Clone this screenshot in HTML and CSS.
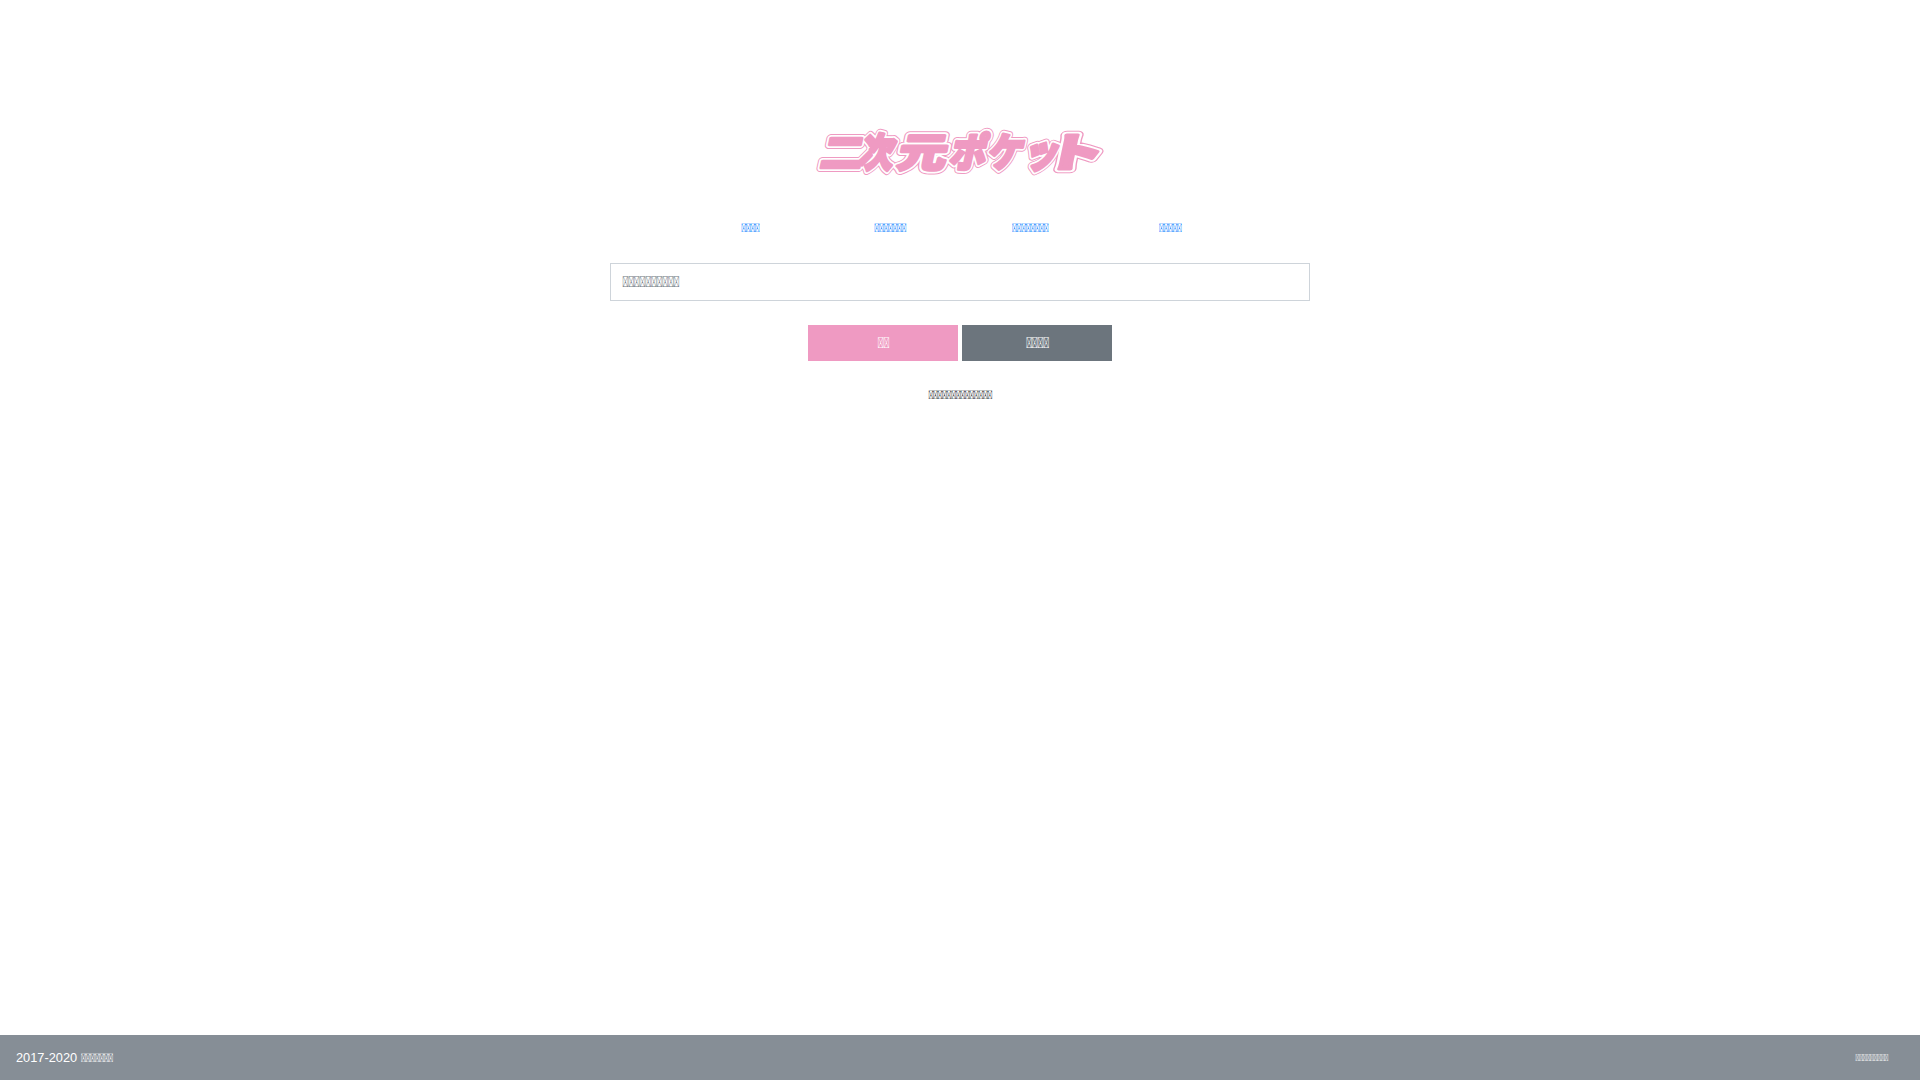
FILE: index.html
```html
<!DOCTYPE html>
<html lang="ja">
<head>
<meta charset="utf-8">
<title>二次元ポケット</title>
<link rel="stylesheet" href="styles.css">
</head>
<body>
<main class="main">
  <h1 class="logo">
    <svg class="logo-svg" viewBox="0 0 300 64" width="300" height="64" role="img" aria-label="二次元ポケット">
      <defs>
        <g id="logo-word" transform="skewX(-12)">
          <text transform="translate(19 47) scale(1.06 1)">二</text>
          <text transform="translate(58 47) scale(.85 1)">次</text>
          <text transform="translate(96 47) scale(1.22 1)">元</text>
          <text transform="translate(148 47) scale(.92 1)">ポ</text>
          <text transform="translate(186 47) scale(.88 1)">ケ</text>
          <text transform="translate(222 47) scale(.9 1)">ッ</text>
          <text transform="translate(243 47) scale(1.45 1)">ト</text>
        </g>
      </defs>
      <use class="logo-edge" href="#logo-word"></use>
      <use class="logo-gap" href="#logo-word"></use>
      <use class="logo-fill" href="#logo-word"></use>
    </svg>
  </h1>
  <nav class="tabs">
    <a class="tab" href="#">&#xE000;&#xE000;&#xE000;&#xE000;</a>
    <a class="tab" href="#">&#xE000;&#xE000;&#xE000;&#xE000;&#xE000;&#xE000;&#xE000;</a>
    <a class="tab" href="#">&#xE000;&#xE000;&#xE000;&#xE000;&#xE000;&#xE000;&#xE000;&#xE000;</a>
    <a class="tab" href="#">&#xE000;&#xE000;&#xE000;&#xE000;&#xE000;</a>
  </nav>
  <form class="search">
    <input class="field" type="text" placeholder="&#xE000;&#xE000;&#xE000;&#xE000;&#xE000;&#xE000;&#xE000;&#xE000;&#xE000;&#xE000;">
    <div class="actions">
      <button class="btn btn-pink" type="button">&#xE000;&#xE000;</button>
      <button class="btn btn-grey" type="button">&#xE000;&#xE000;&#xE000;&#xE000;</button>
    </div>
    <p class="note">&#xE000;&#xE000;&#xE000;&#xE000;&#xE000;&#xE000;&#xE000;&#xE000;&#xE000;&#xE000;&#xE000;&#xE000;&#xE000;&#xE000;</p>
  </form>
</main>
<footer class="footer">
  <div class="copy">2017-2020 <span class="copy-name">&#xE000;&#xE000;&#xE000;&#xE000;&#xE000;&#xE000;&#xE000;</span></div>
  <a class="foot-link" href="#">&#xE000;&#xE000;&#xE000;&#xE000;&#xE000;&#xE000;&#xE000;&#xE000;&#xE000;</a>
</footer>
</body>
</html>
```
FILE: styles.css
```css
* { box-sizing: border-box; }
html, body { height: 100%; }
body {
  margin: 0;
  display: flex;
  flex-direction: column;
  font-family: "Liberation Sans", sans-serif;
  font-size: 16px;
  color: #212529;
  background: #fff;
}
.main { flex: 1; width: 700px; margin: 0 auto; padding-top: 120px; }
.logo { margin: 0; display: flex; justify-content: center; }
.logo-svg { display: block; overflow: visible; }
.logo-svg use { font-family: "Noto Sans CJK JP", sans-serif; font-weight: 900; font-size: 40px; stroke-linejoin: round; }
.logo-edge { fill: #ef9ac2; stroke: #ef9ac2; stroke-width: 8.5px; }
.logo-gap { fill: #fff; stroke: #fff; stroke-width: 6.5px; }
.logo-fill { fill: #ef9ac2; stroke: #ef9ac2; stroke-width: 3px; }
.tabs { display: flex; justify-content: center; margin-top: 28px; }
.tab, .field, .btn, .note, .copy-name, .foot-link { font-family: Roboto, sans-serif; letter-spacing: -.065em; }
.tab { width: 140px; padding: 8px 0; text-align: center; font-size: 12px; line-height: 17px; color: #007bff; text-decoration: none; }
.search { margin-top: 18px; }
.field { display: block; width: 100%; height: 38px; padding: 6px 11px; border: 1px solid #ced4da; background: #fff; font-size: 15px; color: #495057; }
.field::placeholder { color: #6c757d; opacity: 1; }
.actions { display: flex; justify-content: center; gap: 4px; margin-top: 24px; }
.btn { width: 150px; height: 36px; padding: 0; border: 0; font-size: 15px; color: #fff; }
.btn-pink { background: #ef9ac2; }
.btn-grey { background: #6c757d; }
.note { margin: 27px 0 0; text-align: center; font-size: 12px; line-height: 15px; }
.footer { display: flex; justify-content: space-between; align-items: center; height: 45px; padding: 0 32px 0 16px; background: #868e96; color: #fff; }
.copy { font-size: 12.8px; }
.copy-name { font-size: 12px; }
.foot-link { font-size: 9.6px; color: #fff; text-decoration: none; }
```
